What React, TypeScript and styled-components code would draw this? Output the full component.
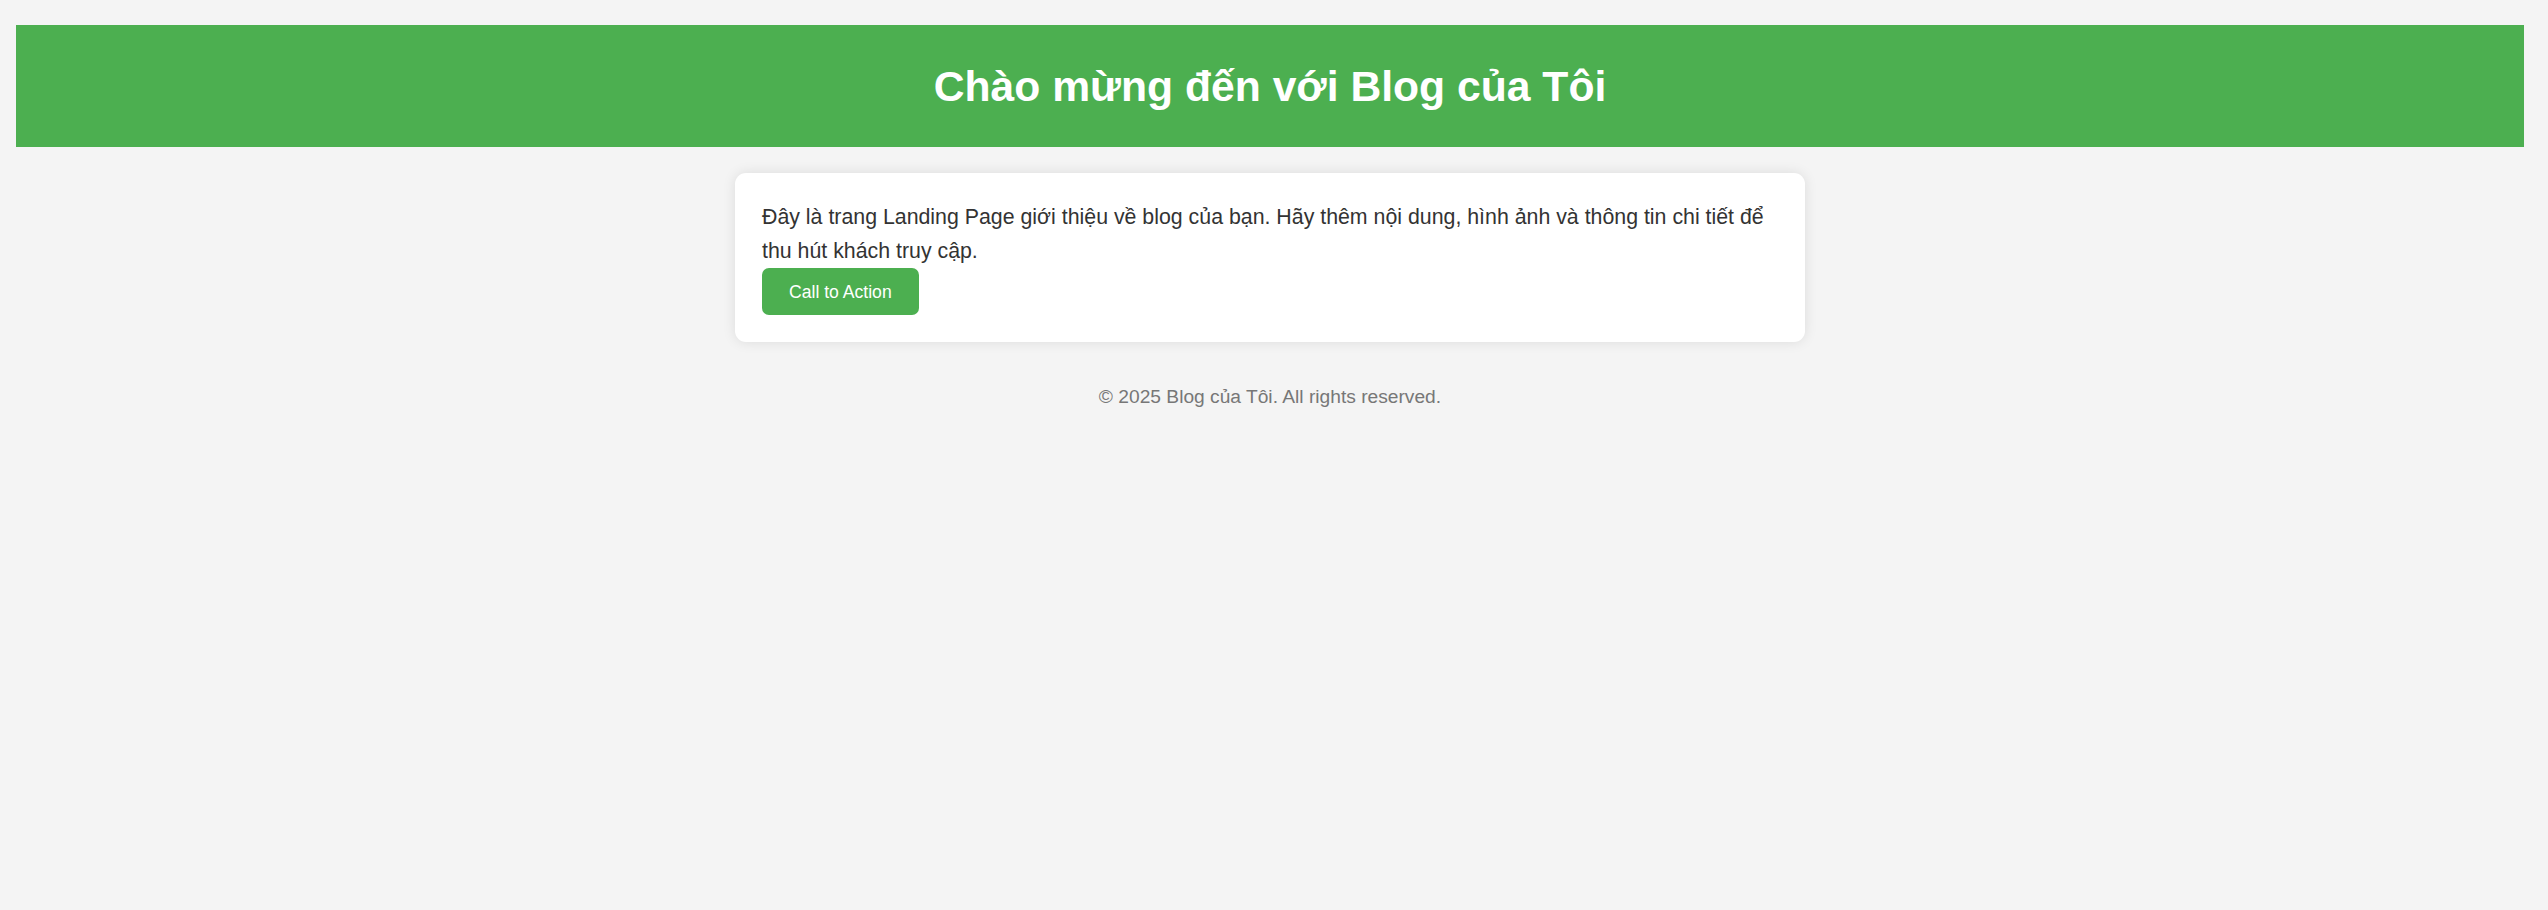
import styled, { createGlobalStyle } from 'styled-components';

const GlobalStyle = createGlobalStyle`
  html, body {
    margin: 0;
    padding: 0;
    background-color: #f4f4f4;
    font-family: "Liberation Sans", Arial, sans-serif;
  }
`;

const App = () => (
  <>
    <GlobalStyle />
    <Page>
      <Header>
        <Title>Chào mừng đến với Blog của Tôi</Title>
      </Header>
      <Card>
        <Intro>
          Đây là trang Landing Page giới thiệu về blog của bạn. Hãy thêm nội dung, hình ảnh và thông tin chi tiết để thu hút khách truy cập.
        </Intro>
        <ActionButton href="#">Call to Action</ActionButton>
      </Card>
      <Footer>© 2025 Blog của Tôi. All rights reserved.</Footer>
    </Page>
  </>
);

const Page = styled.div`
  padding: 25px 24px 0 16px;
  min-height: 100vh;
  box-sizing: border-box;
`;

const Header = styled.header`
  background-color: #4caf50;
  color: #fff;
  height: 122px;
  display: flex;
  align-items: center;
  justify-content: center;
  text-align: center;
`;

const Title = styled.h1`
  margin: 0;
  font-size: 42.67px;
  font-weight: bold;
  line-height: normal;
`;

const Card = styled.main`
  width: 1070px;
  box-sizing: border-box;
  margin: 26px auto 0;
  padding: 27px;
  background: #fff;
  border-radius: 11px;
  box-shadow: 0 0 13px rgba(0, 0, 0, 0.1);
`;

const Intro = styled.p`
  margin: 0;
  font-size: 21.33px;
  line-height: 1.6;
  color: #333;
`;

const ActionButton = styled.a`
  display: inline-block;
  padding: 13.3px 27px;
  background-color: #4caf50;
  color: #fff;
  font-size: 17.6px;
  line-height: 20px;
  text-decoration: none;
  border-radius: 7px;
`;

const Footer = styled.footer`
  margin-top: 44px;
  text-align: center;
  font-size: 19.2px;
  color: #777;
`;

export default App;
